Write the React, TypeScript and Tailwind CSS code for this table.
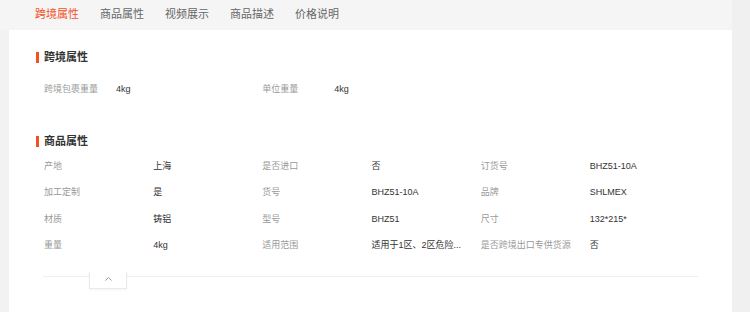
const font = { fontFamily: '"Liberation Sans", "Noto Sans CJK SC", sans-serif' };

const tabs = ["跨境属性", "商品属性", "视频展示", "商品描述", "价格说明"];

const crossAttrs = [
  ["跨境包裹重量", "4kg"],
  ["单位重量", "4kg"],
];

const productAttrs = [
  ["产地", "上海"],
  ["是否进口", "否"],
  ["订货号", "BHZ51-10A"],
  ["加工定制", "是"],
  ["货号", "BHZ51-10A"],
  ["品牌", "SHLMEX"],
  ["材质", "铸铝"],
  ["型号", "BHZ51"],
  ["尺寸", "132*215*"],
  ["重量", "4kg"],
  ["适用范围", "适用于1区、2区危险..."],
  ["是否跨境出口专供货源", "否"],
];

const Heading = ({ title }: { title: string }) => (
  <div className="flex items-center h-5">
    <span className="w-[3px] h-[11px] bg-[#f4511e] mr-[5px]" />
    <span className="text-[11px] font-bold text-[#333]">{title}</span>
  </div>
);

export default function App() {
  return (
    <div className="flex w-[750px] h-[312px] overflow-hidden bg-[#f0f0f0]" style={font}>
      <div className="w-[732px] flex flex-col">
        <div className="h-[30px] bg-[#f5f5f5] flex items-center pl-[35px] gap-[21px] pb-[2px]">
          {tabs.map((t, i) => (
            <span key={t} className={i === 0 ? "text-[11px] text-[#f4511e]" : "text-[11px] text-[#666]"}>
              {t}
            </span>
          ))}
        </div>
        <div className="flex-1 bg-[#f2f2f2] pl-[9px]">
          <div className="h-full bg-white pl-[27px] pt-[17px]">
            <Heading title="跨境属性" />
            <div className="ml-[7px] w-[655px] grid grid-cols-3 mt-[10px]">
              {crossAttrs.map(([k, v]) => (
                <div key={k} className="flex items-center h-[26px] text-[9px]">
                  <span className="w-[73px] pl-px text-[#999]">{k}</span>
                  <span className="text-[#333]">{v}</span>
                </div>
              ))}
            </div>
            <div className="mt-[28px]">
              <Heading title="商品属性" />
            </div>
            <div className="ml-[7px] w-[655px] grid grid-cols-6 mt-[2px]">
              {productAttrs.map(([k, v]) => (
                <div key={k} className="contents">
                  <div className="h-[26.5px] flex items-center pl-px text-[9px] text-[#999] whitespace-nowrap">{k}</div>
                  <div className="h-[26.5px] flex items-center pl-px text-[9px] text-[#333] whitespace-nowrap">{v}</div>
                </div>
              ))}
            </div>
            <div className="ml-[7px] w-[655px] mt-[17px] h-px bg-[#eeeeee] relative">
              <div className="absolute left-[46px] top-[-4px] w-[38px] h-[17px] bg-white border border-[#eaeaea] border-t-0 shadow-[0_1px_2px_rgba(0,0,0,0.05)] flex items-center justify-center">
                <svg width="7" height="4" viewBox="0 0 7 4" className="mb-[2px]">
                  <polyline points="0.5,3.5 3.5,0.5 6.5,3.5" fill="none" stroke="#999" strokeWidth="1" />
                </svg>
              </div>
            </div>
          </div>
        </div>
      </div>
      <div className="flex-1 bg-[#f0f0f0]" />
    </div>
  );
}
